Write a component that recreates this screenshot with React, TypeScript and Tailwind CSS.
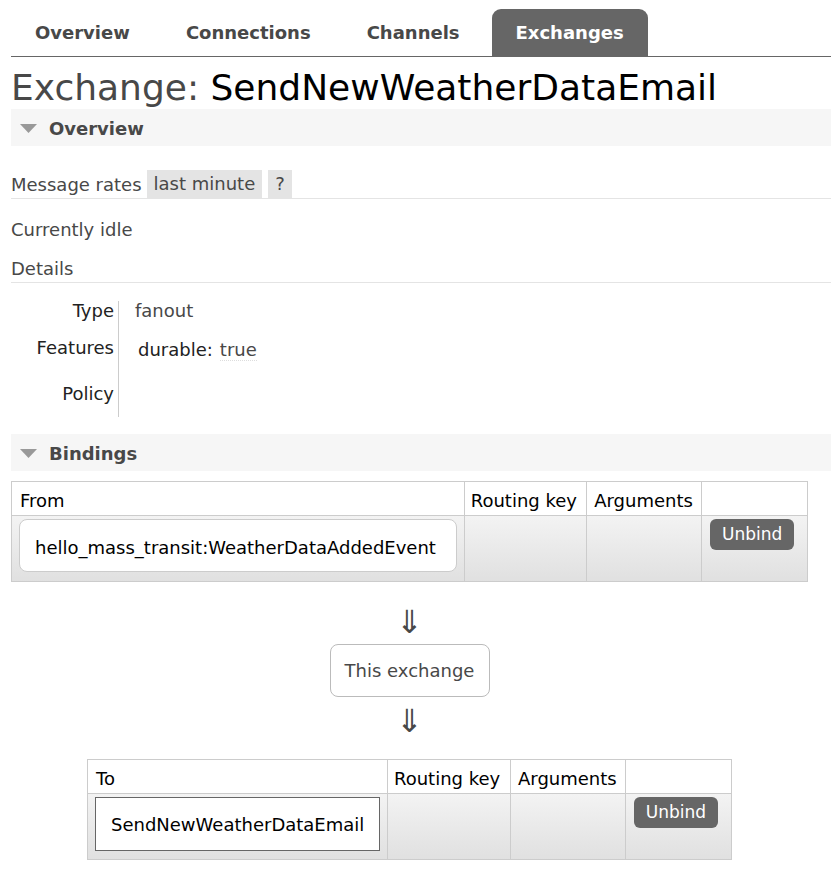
const tabs = ['Overview', 'Connections', 'Channels', 'Exchanges'];

function SectionHeader({ title }: { title: string }) {
  return (
    <div className="flex items-center h-[37px] bg-[#f6f6f6] pl-[9px] pt-[1px]">
      <svg width="17" height="9" viewBox="0 0 17 9" className="mr-[12px]">
        <polygon points="0,0 17,0 8.5,9" fill="#999999" />
      </svg>
      <span className="font-bold text-[#484848]">{title}</span>
    </div>
  );
}

function UnbindButton() {
  return (
    <button className="w-[84px] h-[31px] rounded-[6px] bg-[#666666] text-white text-[17px] leading-[31px]">
      Unbind
    </button>
  );
}

function BindingTable({
  label,
  firstWidth,
  children,
}: {
  label: string;
  firstWidth: string;
  children: React.ReactNode;
}) {
  return (
    <table className="border-collapse text-black">
      <thead>
        <tr className="h-[34px] bg-white">
          <th className={`${firstWidth} border border-[#cccccc] px-[8px] pt-[3px] text-left font-normal`}>{label}</th>
          <th className="w-[123px] border border-[#cccccc] px-[6px] pt-[3px] text-left font-normal">Routing key</th>
          <th className="w-[115px] border border-[#cccccc] px-[7px] pt-[3px] text-left font-normal">Arguments</th>
          <th className="w-[106px] border border-[#cccccc]"></th>
        </tr>
      </thead>
      <tbody>
        <tr className="h-[66px] bg-gradient-to-b from-[#f3f3f3] to-[#e0e0e0]">
          <td className="border border-[#cccccc] px-[7px] py-[3px] align-top">{children}</td>
          <td className="border border-[#cccccc]"></td>
          <td className="border border-[#cccccc]"></td>
          <td className="border border-[#cccccc] align-top pt-[3px] pl-[8px]">
            <UnbindButton />
          </td>
        </tr>
      </tbody>
    </table>
  );
}

function Arrow() {
  return <div className="text-[32px] leading-[30px] text-[#484848]">⇓</div>;
}

export default function App() {
  return (
    <div className="min-h-[880px] bg-white font-['DejaVu_Sans',Verdana,sans-serif] text-[18px] text-[#484848]">
      <div className="pl-[11px]">
        {/* Tabs */}
        <div className="flex gap-[8px] pt-[9px] h-[57px] border-b border-[#666666]">
          {tabs.map((t) => (
            <div
              key={t}
              className={`h-[47px] px-[24px] flex items-center font-bold rounded-t-[9px] ${
                t === 'Exchanges' ? 'bg-[#666666] text-white' : 'text-[#484848]'
              }`}
            >
              {t}
            </div>
          ))}
        </div>

        <h1 className="pt-[10px] text-[36px] leading-[42px]">
          Exchange: <span className="text-black">SendNewWeatherDataEmail</span>
        </h1>

        <SectionHeader title="Overview" />

        <div className="mt-[24px] flex items-center h-[29px] border-b border-[#e4e4e4]">
          <span className="mr-[5px]">Message rates</span>
          <span className="h-[28px] leading-[28px] px-[7px] bg-[#e4e4e4]">last minute</span>
          <span className="ml-[6px] h-[28px] leading-[28px] px-[7px] bg-[#e4e4e4]">?</span>
        </div>

        <div className="pt-[17px] leading-[28px]">Currently idle</div>
        <div className="pt-[11px] leading-[27px] border-b border-[#e4e4e4]">Details</div>

        <div className="mt-[18px] flex">
          <div className="w-[107px] flex flex-col items-end pr-[4px] pb-[2px] text-[#222222]">
            <div className="leading-[20px] pt-[0px]">Type</div>
            <div className="leading-[20px] pt-[17px]">Features</div>
            <div className="leading-[20px] pt-[26px] pb-[11px]">Policy</div>
          </div>
          <div className="border-l border-[#cccccc] pl-[16px]">
            <div className="leading-[20px] pt-[0px]">fanout</div>
            <div className="flex items-center pt-[17px] pl-[3px]">
              <span className="leading-[20px] text-[#222222] mr-[7px]">durable:</span>
              <span className="leading-[20px] mt-[2px] border-b border-dotted border-[#dddddd]">true</span>
            </div>
          </div>
        </div>

        <div className="mt-[17px]">
          <SectionHeader title="Bindings" />
        </div>

        <div className="w-[797px] flex flex-col items-center pt-[10px]">
          <BindingTable label="From" firstWidth="w-[453px]">
            <div className="h-[53px] rounded-[8px] border border-[#cccccc] bg-white flex items-center pl-[15px] pt-[3px]">
              hello_mass_transit:WeatherDataAddedEvent
            </div>
          </BindingTable>

          <div className="mt-[25px]">
            <Arrow />
          </div>
          <div className="mt-[7px] w-[160px] h-[53px] rounded-[8px] border border-[#bbbbbb] flex items-center justify-center">
            This exchange
          </div>
          <div className="mt-[9px]">
            <Arrow />
          </div>

          <div className="mt-[23px]">
            <BindingTable label="To" firstWidth="w-[300px]">
              <div className="h-[54px] border border-[#666666] bg-white flex items-center pl-[15px]">
                SendNewWeatherDataEmail
              </div>
            </BindingTable>
          </div>
        </div>
      </div>
    </div>
  );
}
